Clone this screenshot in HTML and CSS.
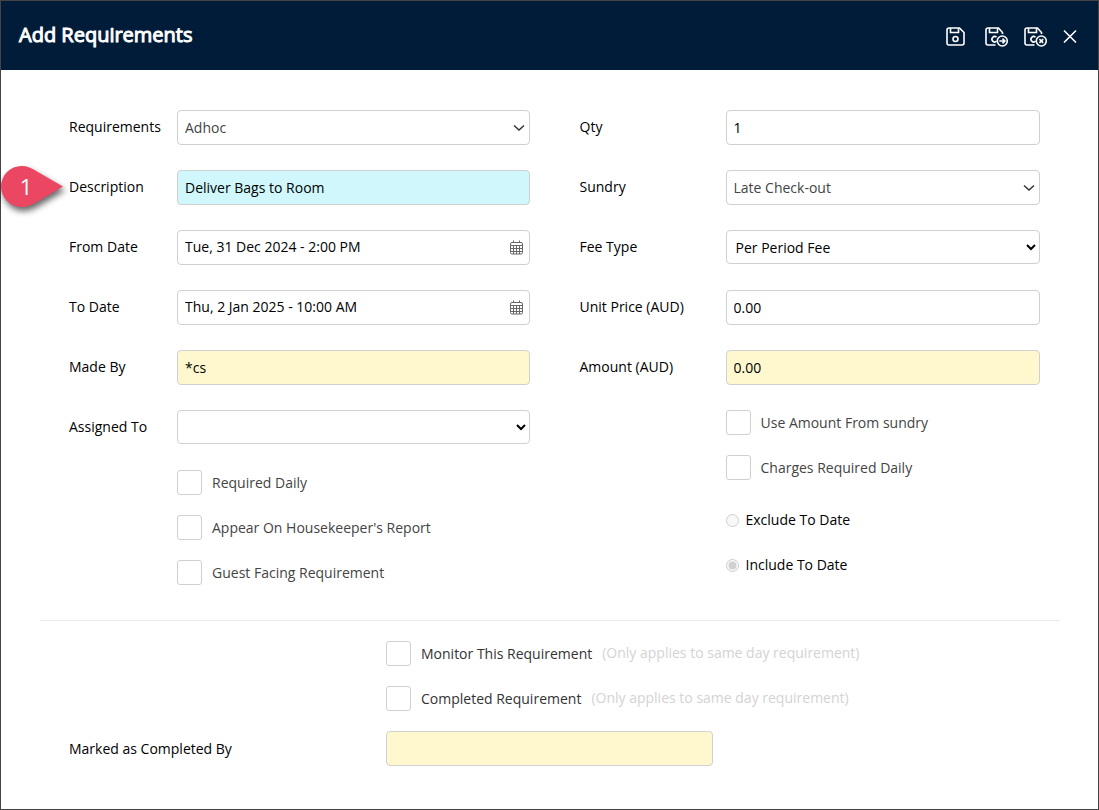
FILE: index.html
```html
<!DOCTYPE html>
<html lang="en">
<head>
    <meta charset="UTF-8">
    <meta name="viewport" content="width=device-width, initial-scale=1.0">
    <title>Add Requirements</title>
    <link rel="stylesheet" href="styles.css">
</head>
<body>
    <div class="dialog">
        <header class="dialog-header">
            <h1>Add Requirements</h1>
            <div class="actions">
                <button type="button" class="icon-button" aria-label="Save">
                    <svg width="19" height="20" viewBox="0 0 19 20">
                        <path d="M3 1h10.500l4.500 4.500v10.500a2 2 0 0 1-2 2H3a2 2 0 0 1-2-2V3a2 2 0 0 1 2-2z"/>
                        <path d="M4.500 1v4.500h8V1"/>
                        <circle cx="9.500" cy="12" r="2.500"/>
                    </svg>
                </button>
                <button type="button" class="icon-button" aria-label="Save and continue">
                    <svg width="23" height="20" viewBox="0 0 23 20">
                        <path d="M10.500 18H3a2 2 0 0 1-2-2V3a2 2 0 0 1 2-2h10.500L17.500 5.500V7"/>
                        <path d="M4.500 1v4.500h8V1"/>
                        <path d="M11.500 10.200a2.700 2.700 0 1 0 0 4"/>
                        <circle cx="17.300" cy="14" r="5"/>
                        <path d="M14.300 14h5.500M17.500 11.600l2.400 2.400-2.400 2.400"/>
                    </svg>
                </button>
                <button type="button" class="icon-button" aria-label="Save and close">
                    <svg width="23" height="20" viewBox="0 0 23 20">
                        <path d="M10.500 18H3a2 2 0 0 1-2-2V3a2 2 0 0 1 2-2h10.500L17.500 5.500V7"/>
                        <path d="M4.500 1v4.500h8V1"/>
                        <path d="M11.500 10.200a2.700 2.700 0 1 0 0 4"/>
                        <circle cx="17.300" cy="14" r="5"/>
                        <path d="M15.400 12.100l3.800 3.800M19.200 12.100l-3.800 3.800"/>
                    </svg>
                </button>
                <button type="button" class="icon-button" aria-label="Close">
                    <svg width="14" height="20" viewBox="0 0 14 20">
                        <path d="M1 3.500l12 12M13 3.500l-12 12"/>
                    </svg>
                </button>
            </div>
        </header>

        <form class="dialog-body">
            <div class="columns">
                <div class="column">
                    <div class="row">
                        <label for="requirements">Requirements</label>
                        <div class="select-wrap">
                            <select id="requirements" class="field combo">
                                <option>Adhoc</option>
                            </select>
                            <svg class="chevron" width="12" height="8" viewBox="0 0 12 8"><path d="M1 1.500l5 4.500 5-4.500"/></svg>
                        </div>
                    </div>
                    <div class="row">
                        <label for="description">Description</label>
                        <input type="text" id="description" class="field active" value="Deliver Bags to Room">
                        <div class="marker">
                            <svg width="68" height="52" viewBox="0 0 68 52">
                                <path d="M62 20.500L36 5.500C31 2 26 0 20.500 0a20.500 20.500 0 0 0 0 41c5.500 0 10.500-2 15.500-5z"/>
                            </svg>
                            <span>1</span>
                        </div>
                    </div>
                    <div class="row">
                        <label for="from-date">From Date</label>
                        <div class="field date">
                            <input type="text" id="from-date" value="Tue, 31 Dec 2024 - 2:00 PM">
                            <button type="button" aria-label="Pick from date">
                                <svg width="13" height="15" viewBox="0 0 13 15">
                                    <path d="M2 2.500h9a1.500 1.500 0 0 1 1.500 1.500v8.500A1.500 1.500 0 0 1 11 14H2a1.500 1.500 0 0 1-1.500-1.500V4A1.500 1.500 0 0 1 2 2.500zM.5 5.500h12M.5 8.500h12M.5 11.500h12M3.500 5.500V14M6.500 5.500V14M9.500 5.500V14M3.500.5v2M9.500.5v2"/>
                                </svg>
                            </button>
                        </div>
                    </div>
                    <div class="row">
                        <label for="to-date">To Date</label>
                        <div class="field date">
                            <input type="text" id="to-date" value="Thu, 2 Jan 2025 - 10:00 AM">
                            <button type="button" aria-label="Pick to date">
                                <svg width="13" height="15" viewBox="0 0 13 15">
                                    <path d="M2 2.500h9a1.500 1.500 0 0 1 1.500 1.500v8.500A1.500 1.500 0 0 1 11 14H2a1.500 1.500 0 0 1-1.500-1.500V4A1.500 1.500 0 0 1 2 2.500zM.5 5.500h12M.5 8.500h12M.5 11.500h12M3.500 5.500V14M6.500 5.500V14M9.500 5.500V14M3.500.5v2M9.500.5v2"/>
                                </svg>
                            </button>
                        </div>
                    </div>
                    <div class="row">
                        <label for="made-by">Made By</label>
                        <input type="text" id="made-by" class="field locked" value="*cs" readonly>
                    </div>
                    <div class="row">
                        <label for="assigned-to">Assigned To</label>
                        <select id="assigned-to" class="field native">
                            <option></option>
                        </select>
                    </div>
                    <div class="checks">
                        <label class="check"><input type="checkbox">Required Daily</label>
                        <label class="check"><input type="checkbox">Appear On Housekeeper's Report</label>
                        <label class="check"><input type="checkbox">Guest Facing Requirement</label>
                    </div>
                </div>

                <div class="column column-right">
                    <div class="row">
                        <label for="qty">Qty</label>
                        <input type="text" id="qty" class="field" value="1">
                    </div>
                    <div class="row">
                        <label for="sundry">Sundry</label>
                        <div class="select-wrap">
                            <select id="sundry" class="field combo">
                                <option>Late Check-out</option>
                            </select>
                            <svg class="chevron" width="12" height="8" viewBox="0 0 12 8"><path d="M1 1.500l5 4.500 5-4.500"/></svg>
                        </div>
                    </div>
                    <div class="row">
                        <label for="fee-type">Fee Type</label>
                        <select id="fee-type" class="field native">
                            <option>Per Period Fee</option>
                        </select>
                    </div>
                    <div class="row">
                        <label for="unit-price">Unit Price (AUD)</label>
                        <input type="text" id="unit-price" class="field" value="0.00">
                    </div>
                    <div class="row">
                        <label for="amount">Amount (AUD)</label>
                        <input type="text" id="amount" class="field locked" value="0.00" readonly>
                    </div>
                    <div class="checks">
                        <label class="check"><input type="checkbox">Use Amount From sundry</label>
                        <label class="check"><input type="checkbox">Charges Required Daily</label>
                        <div class="radios">
                            <label class="radio"><input type="radio" name="to-date-mode" disabled>Exclude To Date</label>
                            <label class="radio"><input type="radio" name="to-date-mode" checked disabled>Include To Date</label>
                        </div>
                    </div>
                </div>
            </div>

            <div class="completion">
                <div class="completion-check">
                    <label class="check"><input type="checkbox">Monitor This Requirement</label>
                    <span class="hint">(Only applies to same day requirement)</span>
                </div>
                <div class="completion-check">
                    <label class="check"><input type="checkbox">Completed Requirement</label>
                    <span class="hint">(Only applies to same day requirement)</span>
                </div>
                <div class="completed-by">
                    <label for="completed-by">Marked as Completed By</label>
                    <input type="text" id="completed-by" class="field locked" readonly>
                </div>
            </div>
        </form>
    </div>
</body>
</html>
```
FILE: styles.css
```css
* {
    box-sizing: border-box;
}

body {
    margin: 0;
    font-family: "Open Sans", "Noto Sans", sans-serif;
    font-size: 14px;
    line-height: 20px;
    color: #000;
    background-color: #fff;
}

input,
select,
button {
    font: inherit;
    color: inherit;
    margin: 0;
}

.dialog {
    min-height: 100vh;
    border: 1px solid #444;
}

.dialog-header {
    display: flex;
    align-items: center;
    justify-content: space-between;
    height: 69px;
    padding: 0 21px 0 18px;
    background-color: #001c38;
    color: #fff;
}

.dialog-header h1 {
    margin: 0;
    padding-bottom: 2px;
    font-size: 20px;
    line-height: 28px;
    font-weight: 400;
    -webkit-text-stroke: 1px #fff;
}

.actions {
    display: flex;
    gap: 16px;
    padding-top: 2px;
}

.icon-button {
    display: flex;
    padding: 0;
    border: none;
    background: none;
    cursor: pointer;
}

.icon-button:first-child {
    margin-right: 4px;
}

.icon-button svg {
    fill: none;
    stroke: #fff;
    stroke-width: 1.6;
}

.dialog-body {
    padding: 40px 38px 43px 39px;
}

.columns {
    display: grid;
    grid-template-columns: 1fr 1fr;
    gap: 50px;
    padding: 0 20px 35px 29px;
    border-bottom: 1px solid #e9e9f0;
}

.row {
    position: relative;
    display: grid;
    grid-template-columns: 108px 1fr;
    height: 35px;
    margin-bottom: 25px;
}

.row > label {
    line-height: 33px;
}

.column-right .row {
    grid-template-columns: 146px 1fr;
}

.field {
    width: 100%;
    height: 35px;
    padding: 0 7px;
    border: 1px solid #d0d0d0;
    border-radius: 4px;
    background-color: #fff;
    outline: none;
}

.active {
    background-color: #cff7fc;
}

.locked {
    background-color: #fff8ce;
}

.native {
    height: 34px;
    padding: 0 0 0 5px;
}

.select-wrap {
    position: relative;
}

.combo {
    display: block;
    appearance: none;
    color: #444;
}

.chevron {
    position: absolute;
    right: 5px;
    top: 14px;
    fill: none;
    stroke: #333;
    stroke-width: 1.5;
    pointer-events: none;
}

.date {
    display: flex;
    align-items: center;
    padding-right: 6px;
}

.date input {
    flex: 1;
    min-width: 0;
    height: 31px;
    margin-bottom: 2px;
    padding: 0;
    border: none;
    outline: none;
    background: none;
}

.date button {
    display: flex;
    padding: 0;
    border: none;
    background: none;
    cursor: pointer;
}

.date svg {
    fill: none;
    stroke: #666;
}

/* numbered callout beside the description */
.marker {
    position: absolute;
    left: -68px;
    top: -4px;
    width: 62px;
    height: 41px;
}

.marker svg {
    display: block;
    fill: #eb4763;
    overflow: visible;
    filter: drop-shadow(2px 4px 3px rgba(0, 0, 0, 0.6));
}

.marker span {
    position: absolute;
    left: 0;
    top: 0;
    width: 50px;
    text-align: center;
    font-size: 22px;
    line-height: 40px;
    color: #fff;
}

.checks {
    display: flex;
    flex-direction: column;
    align-items: flex-start;
    gap: 20px;
    margin-left: 108px;
}

.column-right .checks {
    margin-left: 146px;
}

.check {
    display: flex;
    align-items: center;
    gap: 10px;
    color: #444;
}

.check input {
    appearance: none;
    width: 25px;
    height: 25px;
    border: 1px solid #d0d0d0;
    border-radius: 3px;
    background-color: #fff;
}

.check input:checked {
    background-color: #001c38;
}

.radios {
    display: flex;
    flex-direction: column;
    gap: 25px;
    padding-top: 10px;
}

.radio {
    display: flex;
    align-items: center;
    gap: 7px;
}

.completion {
    padding: 20px 20px 0 29px;
}

.completion-check {
    display: flex;
    gap: 10px;
    margin: 0 0 20px 317px;
}

.completion .check {
    color: #333;
}

.hint {
    color: #d3d3d3;
    line-height: 24px;
}

.completed-by {
    display: grid;
    grid-template-columns: 317px minmax(0, 327px);
    align-items: center;
}
```
